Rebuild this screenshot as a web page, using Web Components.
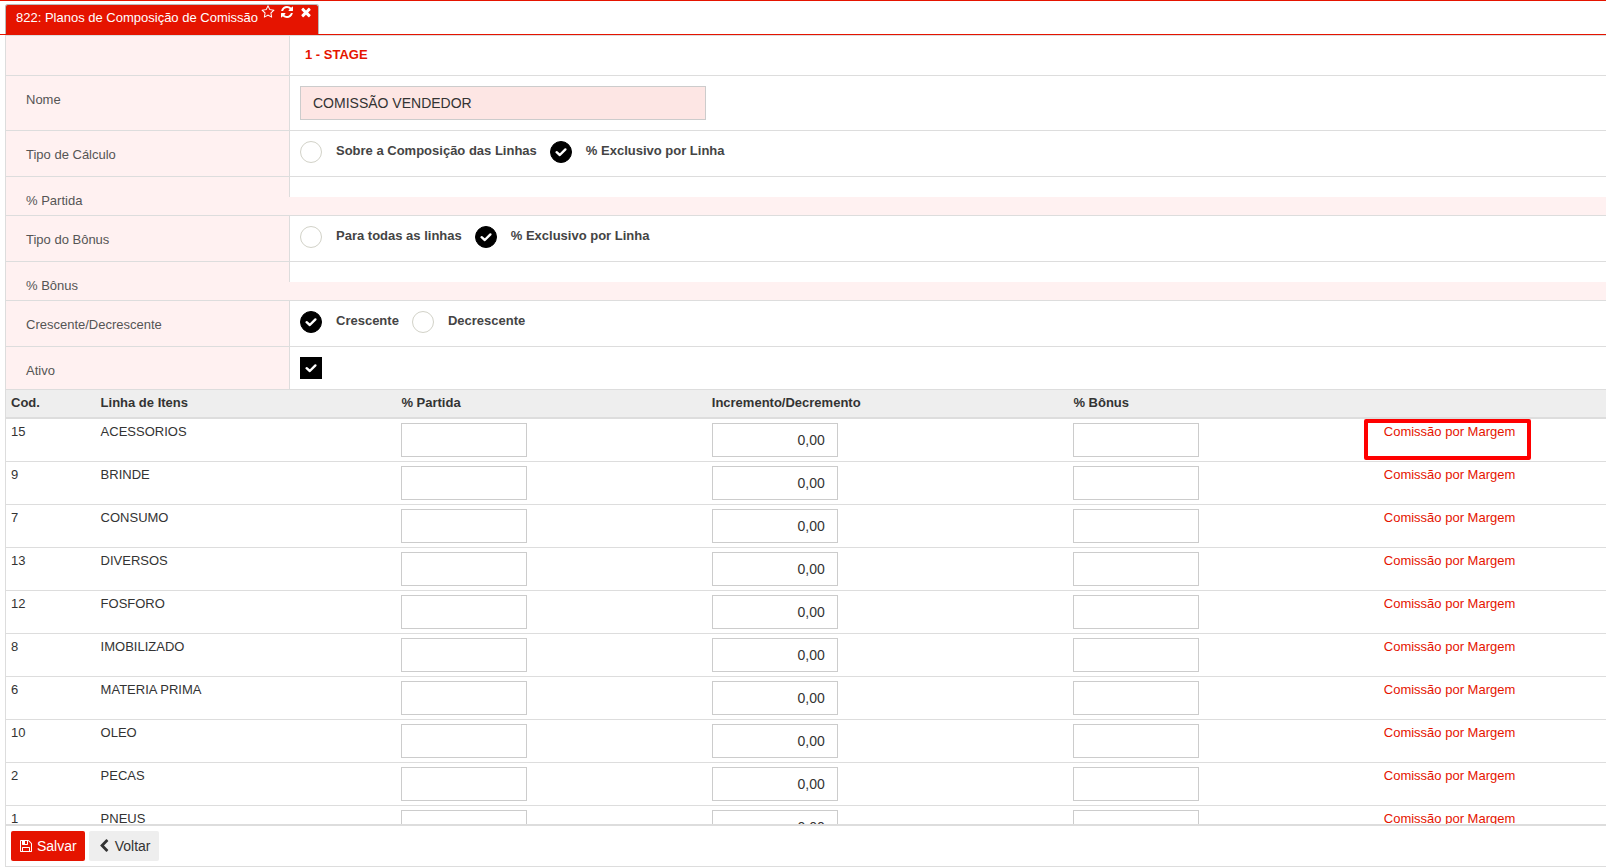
<!DOCTYPE html>
<html lang="pt-BR">
<head>
<meta charset="utf-8">
<title>Planos de Composição de Comissão</title>
<style>
    body{
        margin: 0;
        background: #fff;
        color: #333;
        font: 13px/18px "Liberation Sans", Arial, sans-serif;
    }
</style>
</head>
<body>

<plan-page></plan-page>

<script>
const icons = {
    star: 'M1201 1004l306-297-422-62-189-382-189 382-422 62 306 297-73 421 378-199 377 199zm527-357q0 22-26 48l-363 354 86 500q1 7 1 20 0 50-41 50-19 0-40-12l-449-236-449 236q-22 12-40 12-21 0-31.500-14.500t-10.500-35.500q0-6 2-20l86-500-364-354q-25-27-25-48 0-37 56-46l502-73 225-455q19-41 49-41t49 41l225 455 502 73q56 9 56 46z',
    refresh: 'M1639 1056q0 5-1 7-64 268-268 434.500t-478 166.500q-146 0-282.500-55t-243.500-157l-129 129q-19 19-45 19t-45-19-19-45v-448q0-26 19-45t45-19h448q26 0 45 19t19 45-19 45l-137 137q71 66 161 102t187 36q134 0 250-65t186-179q11-17 53-117 8-23 30-23h192q13 0 22.500 9.500t9.500 22.500zm25-800v448q0 26-19 45t-45 19h-448q-26 0-45-19t-19-45 19-45l138-138q-148-137-349-137-134 0-250 65t-186 179q-11 17-53 117-8 23-30 23h-199q-13 0-22.500-9.500t-9.500-22.500v-7q65-268 270-434.500t480-166.500q146 0 284 55.500t245 156.500l130-129q19-19 45-19t45 19 19 45z',
    times: 'M1490 1322q0 40-28 68l-136 136q-28 28-68 28t-68-28l-294-294-294 294q-28 28-68 28t-68-28l-136-136q-28-28-28-68t28-68l294-294-294-294q-28-28-28-68t28-68l136-136q28-28 68-28t68 28l294 294 294-294q28-28 68-28t68 28l136 136q28 28 28 68t-28 68l-294 294 294 294q28 28 28 68z',
    save: 'M512 1536h768v-384h-768v384zm896 0h128v-896q0-14-10-38.500t-20-34.500l-281-281q-10-10-34-20t-39-10v416q0 40-28 68t-68 28h-576q-40 0-68-28t-28-68v-416h-128v1280h128v-416q0-40 28-68t68-28h832q40 0 68 28t28 68v416zm-384-928v-320q0-13-9.500-22.500t-22.500-9.500h-192q-13 0-22.500 9.500t-9.500 22.500v320q0 13 9.500 22.500t22.500 9.500h192q13 0 22.500-9.500t9.500-22.500zm640 32v928q0 40-28 68t-68 28h-1344q-40 0-68-28t-28-68v-1344q0-40 28-68t68-28h928q40 0 88 20t76 48l280 280q28 28 48 76t20 88z',
    back: 'M1427 301l-531 531 531 531q19 19 19 45t-19 45l-166 166q-19 19-45 19t-45-19l-742-742q-19-19-19-45t19-45l742-742q19-19 45-19t45 19l166 166q19 19 19 45t-19 45z'
};

// round and square tick inputs, shared by choice-group and plan-form
const tickStyles = `
    .tick{
        display: grid;
        width: 22px;
        height: 22px;
    }
    .tick input, .tick svg{
        grid-area: 1 / 1;
        width: 22px;
        height: 22px;
        margin: 0;
    }
    .tick input{
        appearance: none;
        box-sizing: border-box;
        border: 1px solid #d2d2c8;
        background: #fff;
    }
    .tick input[type=radio]{
        border-radius: 50%;
    }
    .tick input:checked{
        border-color: #000;
        background: #000;
    }
    .tick svg{
        visibility: hidden;
        pointer-events: none;
        fill: none;
        stroke: #fff;
        stroke-width: 2.4;
        stroke-linecap: round;
        stroke-linejoin: round;
    }
    .tick input:checked + svg{
        visibility: visible;
    }
`;
const tickMark = '<svg viewBox="0 0 22 22" aria-hidden="true"><path d="M6.600 11.200L9.800 14L15.400 8.400"/></svg>';

class SysIcon extends HTMLElement{

    constructor(){
        super();
        this.attachShadow({mode:'open'});
    }

    connectedCallback(){
        this.shadowRoot.innerHTML = `
            <style>
                :host{
                    display: inline-flex;
                }
                svg{
                    width: 14px;
                    height: 14px;
                    fill: currentColor;
                }
            </style>
            <svg viewBox="0 0 1792 1792" aria-hidden="true"><path d="${icons[this.getAttribute('name')]}"/></svg>
        `;
    }

}

window.customElements.define('sys-icon', SysIcon);

const tabTemplate = document.createElement('template');
tabTemplate.innerHTML = `
    <style>
        :host{
            display: flex;
            box-sizing: border-box;
            padding: 3px 5px 0;
            border-top: 1px solid #e51400;
            border-bottom: 1px solid #e51400;
        }
        .tab{
            display: flex;
            align-items: flex-start;
            gap: 3px;
            box-sizing: border-box;
            height: 30px;
            padding: 0 5px 0 10px;
            border: 1px solid #bbb;
            border-bottom: 0;
            border-radius: 3px 3px 0 0;
            background: #e51400;
            color: #fff;
        }
        .title{
            padding-top: 4px;
            color: inherit;
            text-decoration: none;
        }
        .tools{
            display: flex;
            gap: 5px;
        }
        button{
            display: flex;
            padding: 0;
            border: 0;
            background: none;
            color: inherit;
        }
    </style>
    <div class="tab">
        <a class="title" href="#"><slot></slot></a>
        <div class="tools">
            <button type="button" aria-label="Favorito"><sys-icon name="star"></sys-icon></button>
            <button type="button" aria-label="Atualizar"><sys-icon name="refresh"></sys-icon></button>
            <button type="button" aria-label="Fechar"><sys-icon name="times"></sys-icon></button>
        </div>
    </div>
`;

class PageTab extends HTMLElement{

    constructor(){
        super();
        this.attachShadow({mode:'open'});
        this.shadowRoot.appendChild(tabTemplate.content.cloneNode(true));
    }

}

window.customElements.define('page-tab', PageTab);

const rowTemplate = document.createElement('template');
rowTemplate.innerHTML = `
    <style>
        :host{
            display: grid;
            grid-template-columns: 283px 1fr;
            border-bottom: 1px solid #ddd;
            background: #fff1f1;
        }
        .label{
            padding: 15px 20px 5px;
            color: #555;
        }
        .content{
            padding: 10px;
            border-left: 1px solid #ddd;
            background: #fff;
        }
        :host([empty]) .content{
            align-self: start;
        }
    </style>
    <div class="label"><slot name="label"></slot></div>
    <div class="content"><slot></slot></div>
`;

class FormRow extends HTMLElement{

    constructor(){
        super();
        this.attachShadow({mode:'open'});
        this.shadowRoot.appendChild(rowTemplate.content.cloneNode(true));
    }

}

window.customElements.define('form-row', FormRow);

class ChoiceGroup extends HTMLElement{

    constructor(){
        super();
        this.attachShadow({mode:'open'});
    }

    connectedCallback(){
        const selected = Number(this.getAttribute('selected'));
        const options = this.getAttribute('options').split('|');

        this.shadowRoot.innerHTML = `
            <style>
                :host{
                    display: flex;
                    gap: 13px;
                    padding-bottom: 3px;
                    color: #444;
                    font-weight: bold;
                    line-height: 20px;
                }
                label{
                    display: flex;
                    align-items: flex-start;
                    gap: 14px;
                }
                ${tickStyles}
            </style>
            ${options.map((text, i) => `
                <label>
                    <span class="tick">
                        <input type="radio" name="choice" ${i === selected ? 'checked' : ''}>
                        ${tickMark}
                    </span>
                    <span>${text}</span>
                </label>
            `).join('')}
        `;
    }

}

window.customElements.define('choice-group', ChoiceGroup);

const formTemplate = document.createElement('template');
formTemplate.innerHTML = `
    <style>
        :host{
            display: block;
            border-top: 1px solid #ddd;
        }
        h1{
            margin: 0;
            padding: 0 5px 1px;
            color: #e51400;
            font-size: 13px;
            line-height: 18px;
        }
        #nome{
            display: block;
            box-sizing: border-box;
            width: 406px;
            max-width: 100%;
            height: 34px;
            padding: 0 12px;
            border: 1px solid #ccc;
            background: #fde6e4;
            color: #333;
            font: inherit;
            font-size: 14px;
        }
        ${tickStyles}
    </style>
    <form-row><h1>1 - STAGE</h1></form-row>
    <form-row>
        <label slot="label" for="nome">Nome</label>
        <input id="nome" type="text" value="COMISSÃO VENDEDOR">
    </form-row>
    <form-row>
        <span slot="label">Tipo de Cálculo</span>
        <choice-group role="radiogroup" aria-label="Tipo de Cálculo" options="Sobre a Composição das Linhas|% Exclusivo por Linha" selected="1"></choice-group>
    </form-row>
    <form-row empty><span slot="label">% Partida</span></form-row>
    <form-row>
        <span slot="label">Tipo do Bônus</span>
        <choice-group role="radiogroup" aria-label="Tipo do Bônus" options="Para todas as linhas|% Exclusivo por Linha" selected="1"></choice-group>
    </form-row>
    <form-row empty><span slot="label">% Bônus</span></form-row>
    <form-row>
        <span slot="label">Crescente/Decrescente</span>
        <choice-group role="radiogroup" aria-label="Crescente/Decrescente" options="Crescente|Decrescente" selected="0"></choice-group>
    </form-row>
    <form-row>
        <label slot="label" for="ativo">Ativo</label>
        <span class="tick"><input id="ativo" type="checkbox" checked>${tickMark}</span>
    </form-row>
`;

class PlanForm extends HTMLElement{

    constructor(){
        super();
        this.attachShadow({mode:'open'});
        this.shadowRoot.appendChild(formTemplate.content.cloneNode(true));
    }

}

window.customElements.define('plan-form', PlanForm);

const lines = [
    [15, 'ACESSORIOS'],
    [9, 'BRINDE'],
    [7, 'CONSUMO'],
    [13, 'DIVERSOS'],
    [12, 'FOSFORO'],
    [8, 'IMOBILIZADO'],
    [6, 'MATERIA PRIMA'],
    [10, 'OLEO'],
    [2, 'PECAS'],
    [1, 'PNEUS']
];

class LineTable extends HTMLElement{

    constructor(){
        super();
        this.attachShadow({mode:'open'});
    }

    connectedCallback(){
        this.shadowRoot.innerHTML = `
            <style>
                :host{
                    display: block;
                }
                table{
                    width: 100%;
                    table-layout: fixed;
                    border-collapse: separate;
                    border-spacing: 0;
                }
                .cod{ width: 5.6%; }
                .linha{ width: 18.8%; }
                .partida, .bonus{ width: 19.4%; }
                .incremento{ width: 22.6%; }
                th, td{
                    padding: 4px 5px;
                    text-align: left;
                    vertical-align: top;
                }
                th{
                    padding-bottom: 5px;
                    border-bottom: 2px solid #ddd;
                    background: #eee;
                }
                td{
                    border-bottom: 1px solid #ddd;
                }
                input{
                    display: block;
                    box-sizing: border-box;
                    width: 126px;
                    max-width: 100%;
                    height: 34px;
                    padding: 0 12px;
                    border: 1px solid #ccc;
                    background: #fff;
                    color: #333;
                    font: inherit;
                    font-size: 14px;
                    text-align: right;
                }
                .action{
                    position: relative;
                }
                a{
                    color: #e51400;
                    text-decoration: none;
                }
                /* frame over the first link */
                .mark{
                    position: absolute;
                    top: 0;
                    left: -15px;
                    box-sizing: border-box;
                    width: 167px;
                    height: 41px;
                    border: 4px solid #f00;
                    border-radius: 2px;
                    pointer-events: none;
                }
            </style>
            <table>
                <colgroup>
                    <col class="cod"><col class="linha"><col class="partida"><col class="incremento"><col class="bonus"><col>
                </colgroup>
                <thead>
                    <tr>
                        <th>Cod.</th>
                        <th>Linha de Itens</th>
                        <th>% Partida</th>
                        <th>Incremento/Decremento</th>
                        <th>% Bônus</th>
                        <th></th>
                    </tr>
                </thead>
                <tbody>
                    ${lines.map(([cod, name], i) => `
                        <tr>
                            <td>${cod}</td>
                            <td>${name}</td>
                            <td><input type="text" aria-label="% Partida ${name}"></td>
                            <td><input type="text" aria-label="Incremento/Decremento ${name}" value="0,00"></td>
                            <td><input type="text" aria-label="% Bônus ${name}"></td>
                            <td class="action"><a href="#">Comissão por Margem</a>${i === 0 ? '<span class="mark"></span>' : ''}</td>
                        </tr>
                    `).join('')}
                </tbody>
            </table>
        `;
    }

}

window.customElements.define('line-table', LineTable);

const buttonTemplate = document.createElement('template');
buttonTemplate.innerHTML = `
    <style>
        :host{
            display: block;
        }
        button{
            display: flex;
            align-items: center;
            gap: 4px;
            height: 30px;
            padding: 0 8px;
            border: 0;
            border-radius: 2px;
            background: #eee;
            color: #333;
            font: inherit;
            font-size: 14px;
        }
        :host([primary]) button{
            background: #e51400;
            color: #fff;
        }
    </style>
    <button type="button"><slot name="icon"></slot><slot></slot></button>
`;

class ToolButton extends HTMLElement{

    constructor(){
        super();
        this.attachShadow({mode:'open'});
        this.shadowRoot.appendChild(buttonTemplate.content.cloneNode(true));
    }

}

window.customElements.define('tool-button', ToolButton);

const pageTemplate = document.createElement('template');
pageTemplate.innerHTML = `
    <style>
        :host{
            display: flex;
            flex-direction: column;
            box-sizing: border-box;
            height: 100vh;
            padding-bottom: 1px;
        }
        main, footer{
            margin-left: 5px;
            border-left: 1px solid #ddd;
        }
        main{
            flex: 1;
            min-height: 0;
            overflow-y: auto;
            scrollbar-width: none;
        }
        footer{
            display: flex;
            gap: 4px;
            padding: 5px;
            border-top: 2px solid #ddd;
            border-bottom: 1px solid #ddd;
        }
    </style>
    <page-tab>822: Planos de Composição de Comissão</page-tab>
    <main>
        <plan-form></plan-form>
        <line-table></line-table>
    </main>
    <footer>
        <tool-button primary><sys-icon slot="icon" name="save"></sys-icon>Salvar</tool-button>
        <tool-button><sys-icon slot="icon" name="back"></sys-icon>Voltar</tool-button>
    </footer>
`;

class PlanPage extends HTMLElement{

    constructor(){
        super();
        this.attachShadow({mode:'open'});
        this.shadowRoot.appendChild(pageTemplate.content.cloneNode(true));
    }

}

window.customElements.define('plan-page', PlanPage);
</script>
</body>
</html>
